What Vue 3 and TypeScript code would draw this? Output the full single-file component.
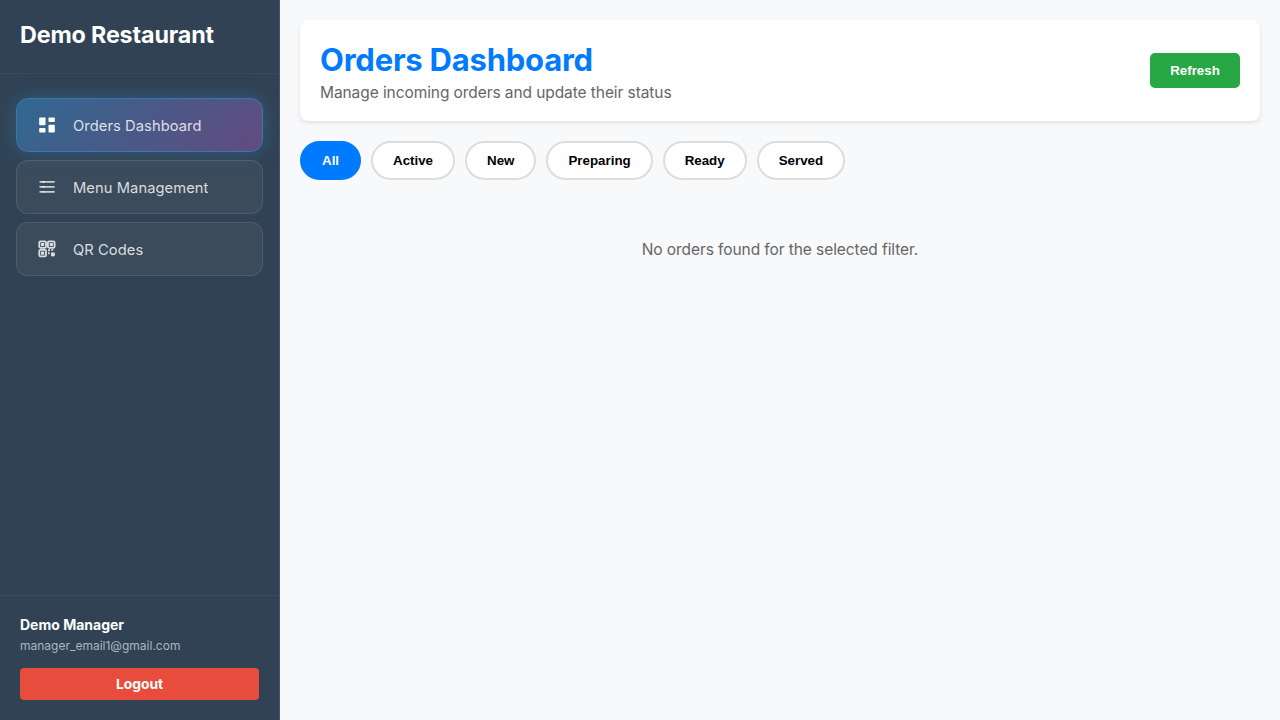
<script setup lang="ts">
import { ref } from 'vue'

interface NavItem {
  id: string
  label: string
}

const navItems: NavItem[] = [
  { id: 'orders', label: 'Orders Dashboard' },
  { id: 'menu', label: 'Menu Management' },
  { id: 'qr', label: 'QR Codes' },
]
const filters: string[] = ['All', 'Active', 'New', 'Preparing', 'Ready', 'Served']

const activeNav = ref('orders')
const activeFilter = ref('All')
</script>

<template>
  <div class="layout">
    <aside class="sidebar">
      <div class="brand">
        <h2>Demo Restaurant</h2>
      </div>
      <nav class="nav">
        <a
          v-for="item in navItems"
          :key="item.id"
          class="nav-item"
          :class="{ active: item.id === activeNav }"
          @click="activeNav = item.id"
        >
          <svg v-if="item.id === 'orders'" class="icon" viewBox="0 0 20 20" fill="currentColor">
            <rect x="2.2" y="2.4" width="6.3" height="7.9" rx="0.8" />
            <rect x="2.2" y="13" width="6.3" height="4.6" rx="0.8" />
            <rect x="11.5" y="2.4" width="6.3" height="4.6" rx="0.8" />
            <rect x="11.5" y="9.7" width="6.3" height="7.9" rx="0.8" />
          </svg>
          <svg v-else-if="item.id === 'menu'" class="icon" viewBox="0 0 20 20" fill="currentColor">
            <g opacity="0.9">
              <rect x="2.3" y="3.9" width="15.6" height="1.9" rx="0.8" />
              <rect x="2.3" y="8.9" width="15.6" height="1.9" rx="0.8" />
              <rect x="2.3" y="13.9" width="15.6" height="1.9" rx="0.8" />
            </g>
            <circle cx="6.5" cy="4.9" r="0.9" />
            <circle cx="6.5" cy="9.9" r="0.9" />
            <circle cx="6.5" cy="14.9" r="0.9" />
          </svg>
          <svg v-else class="icon" viewBox="0 0 20 20" fill="currentColor">
            <g fill="none" stroke="currentColor" stroke-width="1.8">
              <rect x="2.3" y="2.3" width="6.7" height="6.5" rx="1.2" />
              <rect x="10.9" y="2.3" width="6.7" height="6.5" rx="1.2" />
              <rect x="2.3" y="10.9" width="6.7" height="6.5" rx="1.2" />
            </g>
            <rect x="4" y="4" width="3.2" height="3.1" />
            <rect x="12.7" y="4" width="3.2" height="3.1" />
            <rect x="4" y="12.6" width="3.2" height="3.1" />
            <rect x="11" y="10.2" width="2" height="2" />
            <rect x="14.3" y="10.2" width="2" height="1.6" />
            <rect x="11" y="13.2" width="1.6" height="2" />
            <rect x="14" y="13.5" width="3.8" height="3.8" />
          </svg>
          <span class="label">{{ item.label }}</span>
        </a>
      </nav>
      <div class="account">
        <div class="name">Demo Manager</div>
        <div class="email">manager_email1@gmail.com</div>
        <button class="logout" type="button">Logout</button>
      </div>
    </aside>

    <main class="main">
      <header class="page-header">
        <div>
          <h1>Orders Dashboard</h1>
          <p>Manage incoming orders and update their status</p>
        </div>
        <button class="refresh" type="button">Refresh</button>
      </header>
      <div class="filters">
        <button
          v-for="filter in filters"
          :key="filter"
          class="filter"
          :class="{ active: filter === activeFilter }"
          type="button"
          @click="activeFilter = filter"
        >
          {{ filter }}
        </button>
      </div>
      <div class="empty">No orders found for the selected filter.</div>
    </main>
  </div>
</template>

<style>
body {
  margin: 0;
  background: #f8f9fb;
}
</style>

<style scoped>
* {
  box-sizing: border-box;
}
.layout {
  display: flex;
  height: 100vh;
  font-family: Inter, 'Liberation Sans', sans-serif;
  background: #f8f9fb;
}
.sidebar {
  width: 280px;
  flex-shrink: 0;
  display: flex;
  flex-direction: column;
  background: #314254;
  border-right: 1px solid #46566a;
  color: #fff;
}
.brand {
  height: 74px;
  padding: 20px;
  border-bottom: 1px solid #394a5b;
}
.brand h2 {
  margin: 0;
  font-size: 23.3px;
  line-height: 30px;
  font-weight: 700;
  letter-spacing: -0.15px;
}
.nav {
  flex: 1;
  display: flex;
  flex-direction: column;
  gap: 8px;
  padding: 24px 16px;
}
.nav-item {
  display: flex;
  align-items: center;
  gap: 16px;
  height: 54px;
  padding: 0 20px;
  border: 1px solid rgba(255, 255, 255, 0.1);
  border-radius: 12px;
  background: rgba(255, 255, 255, 0.05);
  color: rgba(255, 255, 255, 0.82);
  font-size: 14.7px;
  line-height: 20px;
  font-weight: 400;
  letter-spacing: 0.08px;
  cursor: pointer;
}
.label {
  padding-top: 2px;
}
.nav-item.active {
  background: linear-gradient(135deg, #316890, #624b80);
  border-color: #3579ae;
  box-shadow: 0 0 20px rgba(52, 152, 219, 0.3);
}
.nav-item.active .icon {
  color: #fff;
}
.icon {
  width: 20px;
  height: 20px;
  flex-shrink: 0;
}
.account {
  padding: 20px;
  border-top: 1px solid #394a5b;
}
.name {
  font-size: 14px;
  line-height: 18px;
  font-weight: 700;
  letter-spacing: 0;
}
.email {
  margin: 4px 0 14px;
  font-size: 12px;
  line-height: 16px;
  color: #adb5bd;
}
.logout {
  display: block;
  width: 100%;
  height: 32px;
  padding: 0 0 1px;
  border: 0;
  border-radius: 4px;
  background: #e74c3c;
  color: #fff;
  font-family: inherit;
  font-size: 13.8px;
  font-weight: 700;
}
.main {
  flex: 1;
  padding: 20px;
}
.page-header {
  display: flex;
  align-items: center;
  justify-content: space-between;
  height: 101px;
  padding: 20px;
  border-radius: 8px;
  background: #fff;
  box-shadow: 0 2px 4px rgba(0, 0, 0, 0.1);
}
.page-header h1 {
  margin: 0 0 3px;
  color: #007bff;
  font-size: 31px;
  line-height: 41px;
  font-weight: 700;
  letter-spacing: -0.22px;
}
.page-header p {
  margin: 0;
  color: #666;
  font-size: 15.5px;
  line-height: 19px;
  letter-spacing: -0.08px;
}
.refresh {
  width: 90px;
  height: 35px;
  padding: 0;
  border: 0;
  border-radius: 5px;
  background: #28a745;
  color: #fff;
  font: bold 13.333px 'Liberation Sans', Arial, sans-serif;
}
.filters {
  display: flex;
  gap: 10px;
  margin-top: 20px;
}
.filter {
  height: 39px;
  padding: 10px 20px;
  border: 2px solid #ddd;
  border-radius: 20px;
  background: #fff;
  color: #000;
  font: bold 13.333px/15px 'Liberation Sans', Arial, sans-serif;
  cursor: pointer;
}
.filter.active {
  background: #007bff;
  border-color: #007bff;
  color: #fff;
}
.empty {
  margin-top: 60px;
  text-align: center;
  color: #666;
  font-size: 15.5px;
  line-height: 19px;
  letter-spacing: -0.08px;
}
</style>
